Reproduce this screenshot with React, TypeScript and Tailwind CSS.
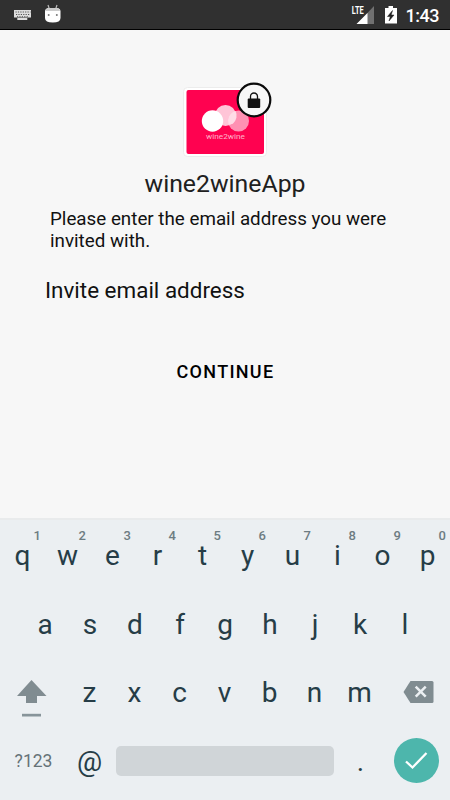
import React from "react";

const numberRow = ["q", "w", "e", "r", "t", "y", "u", "i", "o", "p"];
const homeRow = ["a", "s", "d", "f", "g", "h", "j", "k", "l"];
const lowerRow = ["z", "x", "c", "v", "b", "n", "m"];

function Key({ label, hint }: { label: string; hint?: string }) {
  return (
    <div className="relative flex h-full w-[45px] items-center justify-center pt-[2px] text-[28px] leading-none text-[#263d47]">
      {label}
      {hint && (
        <span className="absolute top-[9px] right-[4px] text-[13px] leading-none font-medium text-[#6d7c82]">{hint}</span>
      )}
    </div>
  );
}

function StatusBar() {
  return (
    <header className="flex h-[30px] items-center justify-between border-b border-black bg-[#303030] text-white">
      <svg width="100" height="29" viewBox="0 0 100 29">
        <path d="M14 10h17v7.500H14zM17.300 18h10v2h-10z" fill="#dedede" />
        <path d="M15.500 12h15M16 14.500h14M17 16.700h11" stroke="#303030" strokeWidth=".8" strokeDasharray="1.2 1.2" />
        <path d="M48 5l1.500 4.500M57 5l-1.500 4.500" stroke="#bbb" strokeWidth="1.200" />
        <path d="M45 11.500Q45 8 49 8h7.500q4 0 4 3.500V18q0 4.500-7.700 4.500T45 18z" fill="#fff" />
        <path d="M45.500 11Q46 8 49 8h7.500q3 0 3.500 3z" fill="#ccc" />
        <circle cx="48.700" cy="15" r="1" fill="#777" />
        <circle cx="56.800" cy="15" r="1" fill="#777" />
      </svg>
      <svg width="110" height="29" viewBox="340 0 110 29">
        <path d="M374 6v18h-17z" fill="#707070" />
        <path d="M367.500 13v11H356.500z" fill="#fff" />
        <text x="351.700" y="14" textLength="12" lengthAdjust="spacingAndGlyphs" fill="#fff" fontSize="10.500" fontWeight="700">LTE</text>
        <path d="M388.500 6h4.500v2h4v15.500h-12V8h3.500z" fill="#fff" />
        <path d="M392.500 10.500l-5 6h2.800l-1.300 4.500 5-6h-2.800z" fill="#202020" stroke="#202020" strokeWidth=".5" />
        <text x="405.500" y="22" textLength="34" fill="#fff" fontSize="18" fontWeight="500">1:43</text>
      </svg>
    </header>
  );
}

function AppLogo() {
  return (
    <svg className="mt-[50px] block" width="105" height="79" viewBox="175 80 105 79">
      <rect x="183.500" y="87.500" width="83" height="69" rx="4" fill="#fff" stroke="#ececec" />
      <rect x="186.500" y="90" width="77.500" height="64" rx="2" fill="#ff0250" />
      <circle cx="238.500" cy="121" r="10.500" fill="#ff91b3" />
      <circle cx="225.500" cy="115.500" r="10.500" fill="#ffc5d7" />
      <path d="M232.800 123.700A10.500 10.500 0 0 0 235.600 111A10.500 10.500 0 0 0 228.600 124.500A10.500 10.500 0 0 0 232.800 123.700z" fill="#ffdce7" />
      <circle cx="212.500" cy="121" r="10.700" fill="#fff" />
      <text x="206" y="139.300" textLength="39" lengthAdjust="spacingAndGlyphs" fontSize="8" fill="#ffb3c9">wine2wine</text>
      <circle cx="254" cy="100" r="16.300" fill="#f7f7f7" stroke="#0b0b0b" strokeWidth="2.200" />
      <rect x="247.700" y="98.500" width="12.500" height="9.500" rx="1" fill="#111" />
      <path d="M250.500 99v-2.500a3.500 3.500 0 0 1 7 0V99" fill="none" stroke="#111" strokeWidth="1.300" />
    </svg>
  );
}

export default function App() {
  return (
    <div className="flex h-[800px] w-[450px] flex-col overflow-hidden bg-[#f7f7f7] font-['Roboto',sans-serif]">
      <StatusBar />
      <main className="flex h-[488px] flex-col text-[#111]">
        <div className="flex justify-center pl-[5px]"><AppLogo /></div>
        <h1 className="mt-[10px] text-center text-[24.800px] leading-[30px] text-[#202020]">wine2wineApp</h1>
        <p className="mt-[9px] pl-[50px] text-[18.800px] leading-[22px]">
          Please enter the email address you were<br />invited with.
        </p>
        <label className="mt-[23px] pl-[45px] text-[22.450px] leading-[30px]">Invite email address</label>
        <button className="mt-[53px] self-center pl-[1px] text-[18px] leading-[28px] font-medium tracking-[1.300px] text-black">CONTINUE</button>
      </main>
      <section className="flex h-[282px] flex-col border-t-2 border-[#e9ebec] bg-[#ebeff2]">
        <div className="flex h-[69px]">
          {numberRow.map((key, i) => <Key key={key} label={key} hint={String((i + 1) % 10)} />)}
        </div>
        <div className="flex h-[69px] justify-center">
          {homeRow.map((key) => <Key key={key} label={key} />)}
        </div>
        <div className="flex h-[68px]">
          <svg width="67" height="68" viewBox="0 658 67 68">
            <path d="M31.500 680l15 16H37v7H26v-7h-9z" fill="#808c91" />
            <path d="M22 713.800h19v2.700H22z" fill="#87949a" />
          </svg>
          {lowerRow.map((key) => <Key key={key} label={key} />)}
          <svg width="68" height="68" viewBox="382 658 68 68">
            <path d="M410.500 681h21.500q1.500 0 1.500 1.500v19q0 1.500-1.500 1.500h-21.500l-7-11z" fill="#808c91" />
            <path d="M415.700 686.700l10 10m0-10l-10 10" stroke="#ebeff2" strokeWidth="2.500" />
          </svg>
        </div>
        <div className="flex h-[69px] items-center">
          <div className="w-[67px] pt-[2px] text-center text-[17.500px] text-[#657277]">?123</div>
          <Key label="@" />
          <div className="ml-[4px] h-[30px] w-[218px] rounded-[5px] bg-[#d0d5d8]" />
          <div className="ml-[4px]"><Key label="." /></div>
          <div className="ml-[11px] flex size-[45px] items-center justify-center rounded-full bg-[#4db6ac]">
            <svg width="45" height="45" viewBox="394 738 45 45">
              <path d="M406 761.500l6.500 6 14-14.500" fill="none" stroke="#fff" strokeWidth="2.300" />
            </svg>
          </div>
        </div>
      </section>
    </div>
  );
}
